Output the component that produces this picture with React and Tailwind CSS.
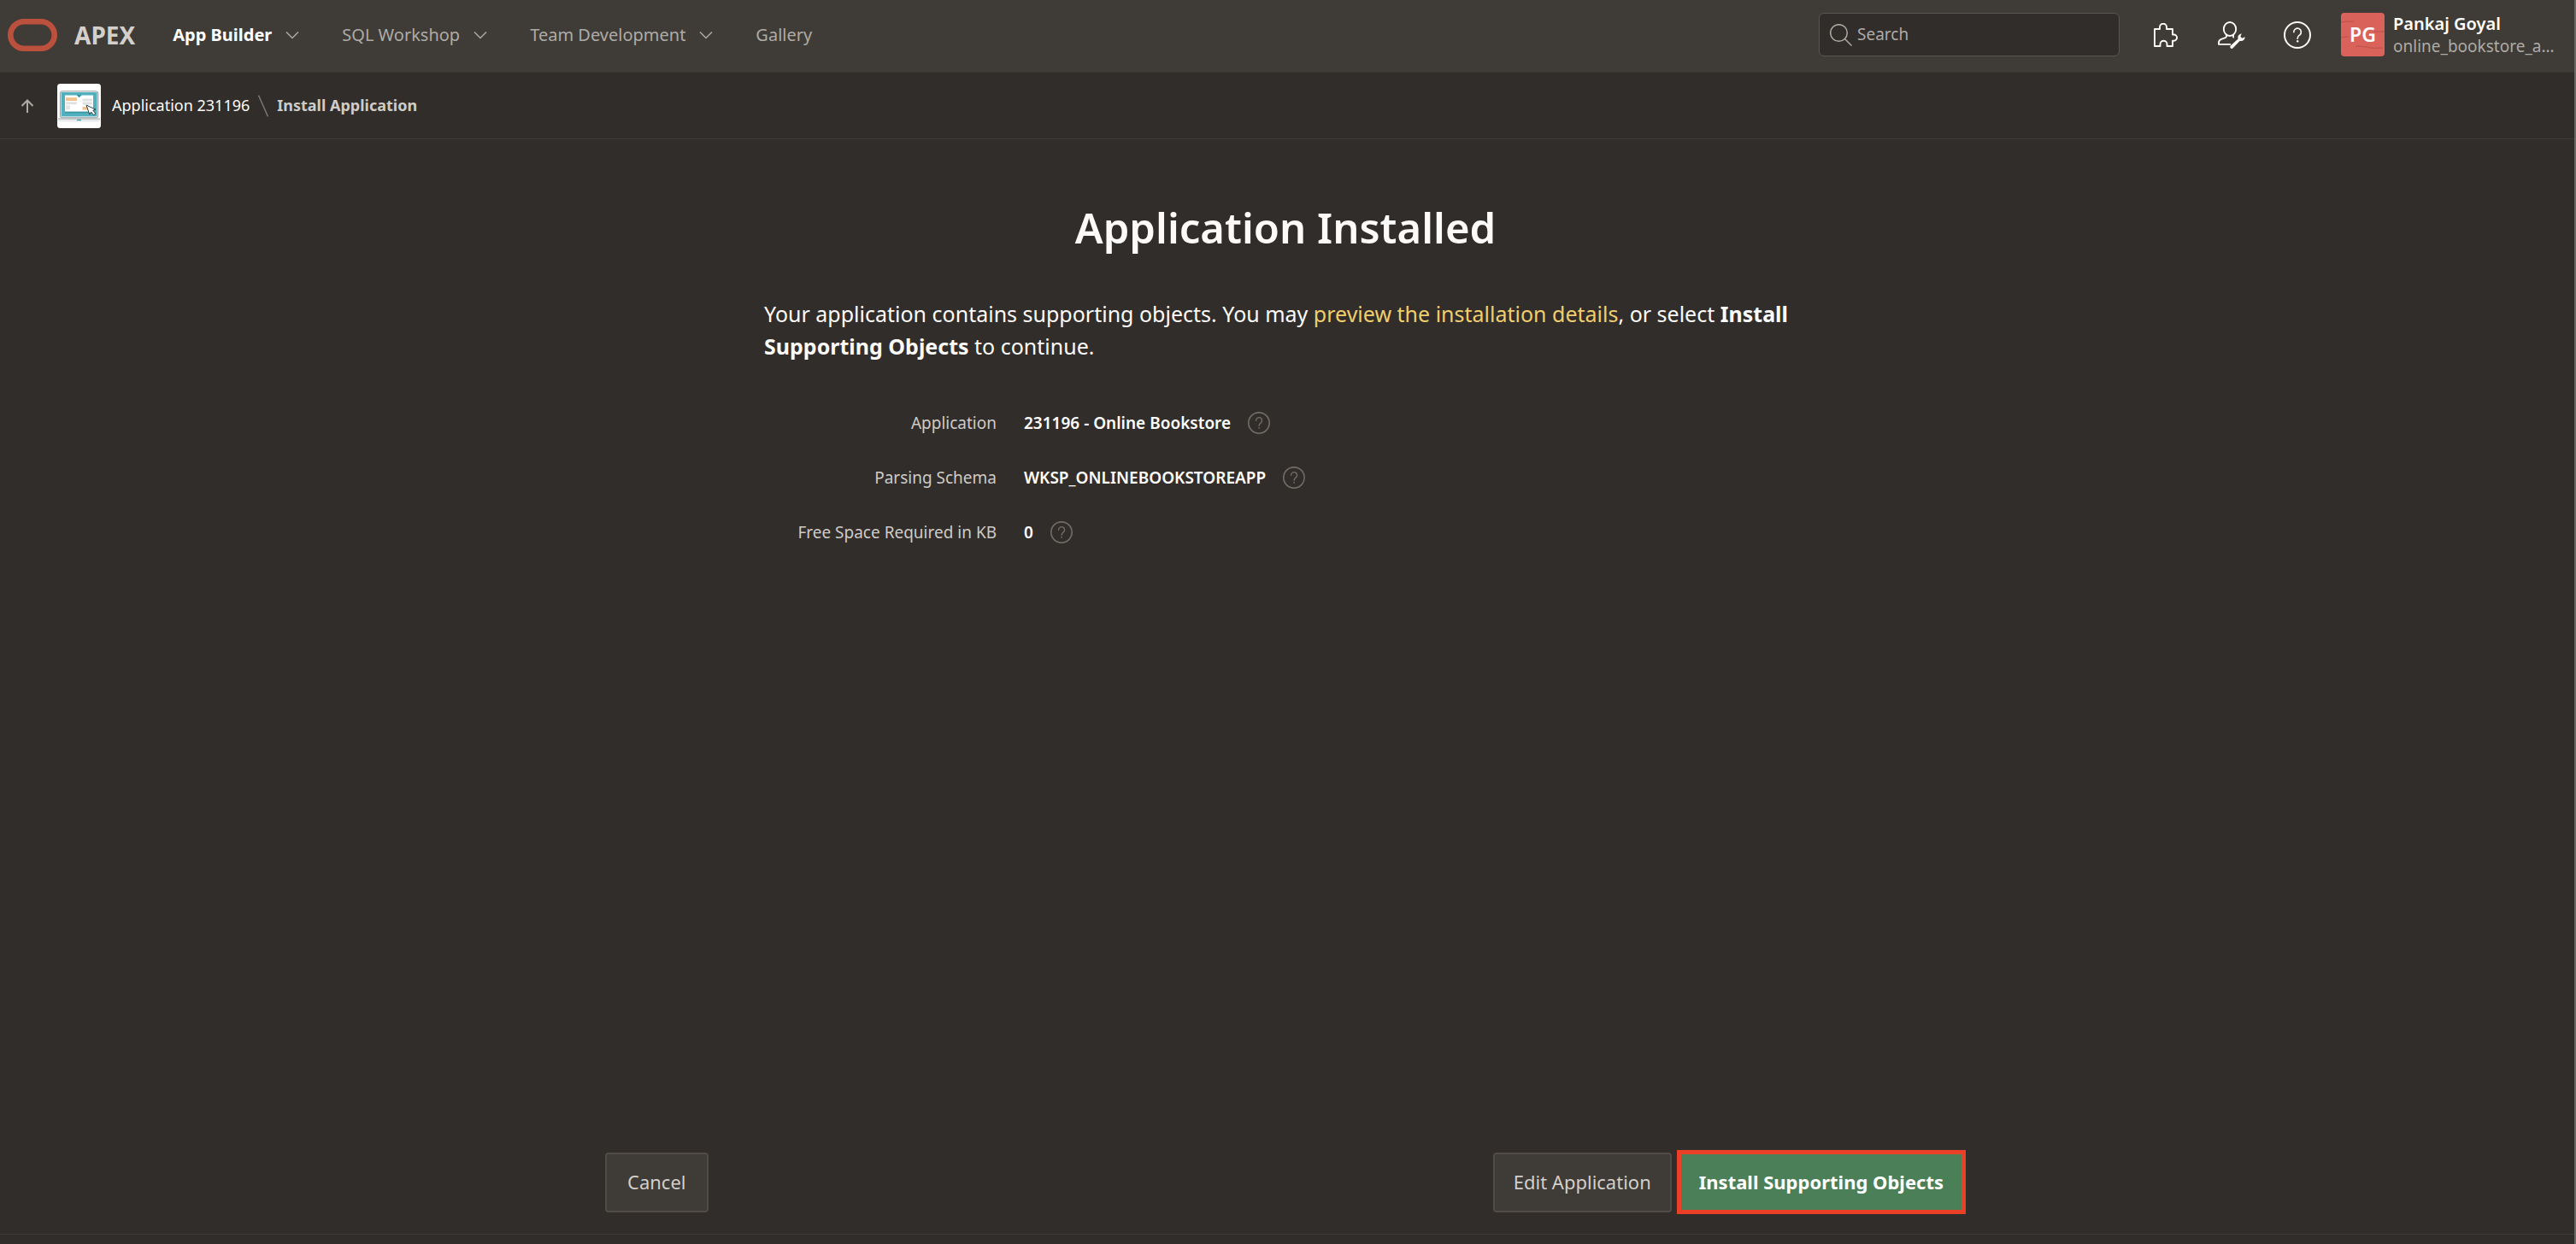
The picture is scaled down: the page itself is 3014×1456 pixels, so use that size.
function Chevron() {
  return (
    <svg className="h-4 w-4 shrink-0" viewBox="0 0 16 16" fill="none" stroke="currentColor" strokeWidth="1.5" aria-hidden="true">
      <path d="M1 4.5 8 11.5 15 4.5" />
    </svg>
  );
}

function QuestionIcon({ className }) {
  return (
    <svg className={className} viewBox="0 0 32 32" fill="none" stroke="currentColor" aria-hidden="true">
      <circle cx="16" cy="16" r="15" strokeWidth="2" />
      <path d="M11.8 12.6a4.3 4.3 0 1 1 6.9 3.3c-1.7 1.2-2.5 2-2.5 3.8v.4" strokeWidth="1.7" strokeLinecap="round" />
      <circle cx="16.2" cy="23.2" r="1.2" fill="currentColor" stroke="none" />
    </svg>
  );
}

function AppIcon() {
  return (
    <svg className="h-[52px] w-[51px]" viewBox="0 0 51 52" aria-hidden="true">
      <rect width="51" height="52" rx="3.5" fill="#fff" />
      <rect x="3.4" y="8.8" width="44.4" height="31" rx="2.4" fill="#fff" stroke="#8f9496" strokeWidth="1" />
      <rect x="4.6" y="10" width="42" height="28.4" fill="#50b0be" />
      <path d="M9 32.6h33v1.6H9z" fill="#3a94a1" />
      <path d="M9 13.6h14.500l2.500 1.800 2.500-1.800H42v19H9z" fill="#fff" />
      <path d="M22.500 13h6l-3 3.200z" fill="#3494a2" />
      <rect x="10" y="16.2" width="13" height="3.8" fill="#f2c38d" />
      <rect x="10" y="21.4" width="13" height="2.8" fill="#dfe2e5" />
      <rect x="10" y="25.2" width="5" height="5" fill="#e3e5e7" />
      <rect x="29.5" y="17.5" width="11.500" height="3" fill="#dfe2e5" />
      <rect x="29.5" y="21.5" width="11.500" height="3" fill="#dfe2e5" />
      <rect x="29.5" y="27" width="8" height="3.6" fill="#f2c38d" />
      <path d="M34 25 45 30.200l-3.200 1 3 3.600-2.200 1.800-3-3.600-1.800 3z" fill="#fff" stroke="#33403f" strokeWidth="1" strokeLinejoin="round" />
      <path d="M1 41.200h49v2q0 1.300-2 1.300H3q-2 0-2-1.300z" fill="#e9ebec" />
      <path d="M1 41h49" stroke="#9da1a3" strokeWidth="1" />
      <rect x="23" y="41.800" width="5" height="1.400" fill="#3f9fab" />
    </svg>
  );
}

function FormRow({ label, value, id }) {
  return (
    <div className="flex h-16 items-center text-[19px]">
      <span id={id} className="w-[272px] shrink-0 text-right text-[#cfcbc7]">{label}</span>
      <span aria-labelledby={id} className="ml-8 font-semibold text-white">{value}</span>
      <button type="button" aria-label={`Help: ${label}`} className="ml-5 text-[#716c67]">
        <QuestionIcon className="h-[26px] w-[26px]" />
      </button>
    </div>
  );
}

export default function App() {
  return (
    <div className="flex min-h-screen flex-col border-r-2 border-[#6b6966] bg-[#312d2a] font-['Noto_Sans',sans-serif] text-[#fcfbfa]">
      <header className="flex h-[85px] items-center border-b border-[#393632] bg-[#3f3b36] pb-[3px]">
        <a href="#home" className="flex items-center gap-5 pl-[9px]">
          <svg className="h-[38px] w-[58px]" viewBox="0 0 58 38" fill="none" aria-hidden="true">
            <rect x="3.3" y="3.3" width="51.4" height="31.4" rx="15.7" stroke="#bb503c" strokeWidth="6.6" />
          </svg>
          <span className="text-[28px] font-bold text-[#d3cfcb]">APEX</span>
        </a>
        <nav className="ml-11 flex items-center gap-[50px] text-[20px] text-[#aeaba7]">
          <button type="button" className="flex items-center gap-4 font-bold text-white">App Builder<span className="text-[#aeaba7]"><Chevron /></span></button>
          <button type="button" className="flex items-center gap-4">SQL Workshop<Chevron /></button>
          <button type="button" className="flex items-center gap-4">Team Development<Chevron /></button>
          <a href="#gallery">Gallery</a>
        </nav>
        <div className="ml-auto flex items-center">
          <label className="flex h-[51px] w-[352px] items-center rounded-md border border-[#5a5550] bg-[#312d2a] pl-3">
            <svg className="h-[26px] w-[26px] shrink-0 text-[#aeaba7]" viewBox="0 0 26 26" fill="none" stroke="currentColor" strokeWidth="1.5" aria-hidden="true">
              <circle cx="10.5" cy="10.5" r="9.8" />
              <path d="m17.5 17.5 8 8" />
            </svg>
            <input type="search" aria-label="Search" placeholder="Search" className="ml-[6px] w-full bg-transparent text-[19px] outline-none placeholder:text-[#aeaba7]" />
          </label>
          <button type="button" aria-label="Extensions" className="ml-10">
            <svg className="h-7 w-7" viewBox="0 0 28 28" fill="none" stroke="currentColor" strokeWidth="1.9" strokeLinejoin="round" aria-hidden="true">
              <path d="M1 7h6V4.700a4 4 0 0 1 8 0V7h7v6.500h1.500a3.600 3.600 0 0 1 0 7.200H22V27h-6.500v-2.300a4 4 0 0 0-8 0V27H1z" />
            </svg>
          </button>
          <button type="button" aria-label="Administration" className="ml-[47px]">
            <svg className="h-8 w-8" viewBox="0 0 32 32" fill="none" stroke="currentColor" strokeWidth="1.9" aria-hidden="true">
              <ellipse cx="14" cy="9" rx="7.2" ry="8" />
              <path d="M10 15.800v1.400c0 1-.4 1.700-1.300 2l-4.700 1.700C2 21.700 1 23 1 25v1.900h14" strokeLinejoin="round" />
              <path d="M18 15.800v2c0 .6.300 1 .8 1.200" />
              <path d="M14.800 28.600 23.600 20.500c-.8-2.900.8-5.600 4.200-6.200l-1.400 3.500 1.800 1.900 3.600-1.500c-.3 3.700-3 5.500-6.200 4.700L17.400 31.500c-1.600 1.400-4.200-1-2.600-2.900z" fill="currentColor" stroke="none" />
            </svg>
          </button>
          <button type="button" aria-label="Help" className="ml-[45px]">
            <QuestionIcon className="h-8 w-8" />
          </button>
          <button type="button" className="mr-[22px] ml-[35px] flex items-center gap-[10px] text-left">
            <span className="relative flex h-[51px] w-[51px] items-center justify-center overflow-hidden rounded bg-[#d9635a] text-[23px] font-semibold text-white">
              <svg className="absolute inset-0 h-full w-full" viewBox="0 0 51 51" fill="none" stroke="#c4564f" strokeWidth="1.6" aria-hidden="true">
                <path d="M0 11q6-1 15-1M0 29q5-1 9-1M38 22h13M17 39q12 .5 18 2 8 .5 14 0" />
              </svg>
              <span className="relative">PG</span>
            </span>
            <span className="block w-[190px] whitespace-nowrap">
              <span className="block text-[20px] leading-[26px] font-semibold text-white">Pankaj Goyal</span>
              <span className="block text-[19px] leading-[26px] text-[#aeaba7]">online_bookstore_a…</span>
            </span>
          </button>
        </div>
      </header>

      <nav aria-label="Breadcrumb" className="flex h-[78px] items-center border-b border-[#403c38] text-[18px]">
        <button type="button" aria-label="Up" className="ml-6 text-[#aeaba7]">
          <svg className="h-4 w-4" viewBox="0 0 16 16" fill="none" stroke="currentColor" strokeWidth="2" aria-hidden="true">
            <path d="M8 16V1.500M1.500 8 8 1.500 14.500 8" />
          </svg>
        </button>
        <a href="#application" className="ml-[27px] flex items-center gap-[13px]"><AppIcon />Application 231196</a>
        <svg className="mx-[10px] h-[26px] w-3" viewBox="0 0 12 26" stroke="#7a7571" strokeWidth="1.6" aria-hidden="true"><path d="m.5.5 11 25" /></svg>
        <span className="font-bold text-[#cfcbc7]">Install Application</span>
      </nav>

      <div className="flex flex-1 flex-col pr-1">
        <main className="mx-auto flex w-full max-w-[1592px] flex-1 flex-col">
          <div className="mx-auto w-full max-w-[1220px] pt-[67px]">
            <h1 className="text-center text-[49px] leading-[72px] font-semibold">Application Installed</h1>
            <p className="mt-[46px] text-[25px] leading-[38px]">
              Your application contains supporting objects. You may <a href="#details" className="text-[#f1ce6d]">preview the installation details</a>, or select <strong className="font-bold">Install Supporting Objects</strong> to continue.
            </p>
            <div className="mt-[39px]">
              <FormRow id="app" label="Application" value="231196 - Online Bookstore" />
              <FormRow id="schema" label="Parsing Schema" value="WKSP_ONLINEBOOKSTOREAPP" />
              <FormRow id="space" label="Free Space Required in KB" value="0" />
            </div>
          </div>
          <div className="mt-auto flex items-center pb-[23px] text-[22px]">
            <button type="button" className="h-[70px] rounded border-2 border-[#504b47] bg-[#3f3b36] px-6 text-[#d3cfcb]">Cancel</button>
            <button type="button" className="ml-auto h-[70px] rounded border-2 border-[#504b47] bg-[#3f3b36] px-[22px] text-[#d3cfcb]">Edit Application</button>
            <button type="button" className="ml-[6px] h-[75px] border-5 border-[#ea4027] bg-[#4b7f58] px-[21px] font-bold text-white">Install Supporting Objects</button>
          </div>
        </main>
      </div>
      <footer className="h-3 border-t border-[#403c38]" />
    </div>
  );
}
